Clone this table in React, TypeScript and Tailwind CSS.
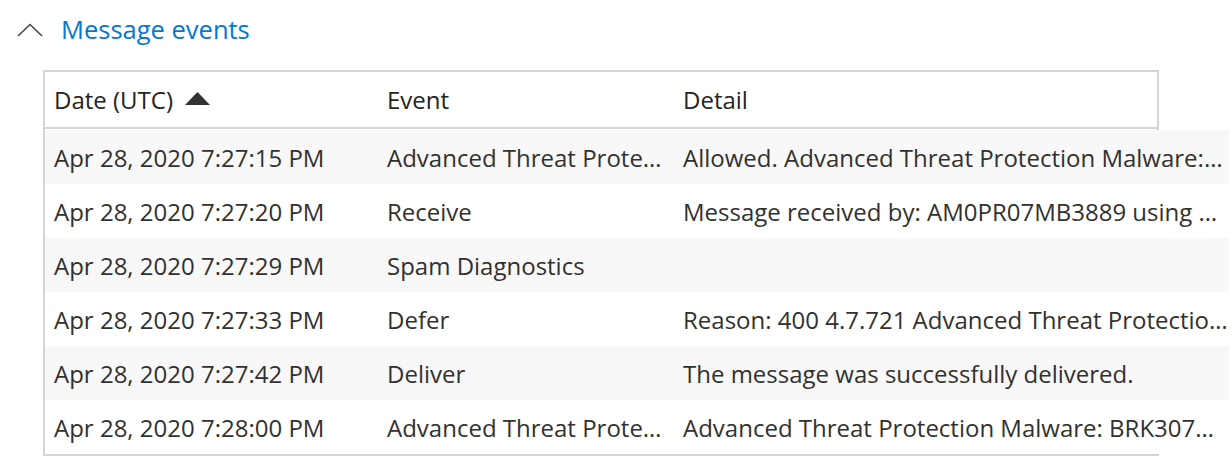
import React from "react";

const rows = [
  ["Apr 28, 2020 7:27:15 PM", "Advanced Threat Prote…", "Allowed. Advanced Threat Protection Malware:…"],
  ["Apr 28, 2020 7:27:20 PM", "Receive", "Message received by: AM0PR07MB3889 using …"],
  ["Apr 28, 2020 7:27:29 PM", "Spam Diagnostics", ""],
  ["Apr 28, 2020 7:27:33 PM", "Defer", "Reason: 400 4.7.721 Advanced Threat Protectio…"],
  ["Apr 28, 2020 7:27:42 PM", "Deliver", "The message was successfully delivered."],
  ["Apr 28, 2020 7:28:00 PM", "Advanced Threat Prote…", "Advanced Threat Protection Malware: BRK307…"],
];

export default function App() {
  return (
    <div
      className="w-[1232px] h-[470px] bg-white overflow-hidden text-[#323130]"
      style={{ fontFamily: '"Segoe UI", "Open Sans", "Noto Sans", sans-serif' }}
    >
      <div className="flex items-center h-[60px] pl-[17px]">
        <svg width="26" height="14" viewBox="0 0 26 14" className="mr-[18px]">
          <path d="M1 13 L13 1.5 L25 13" fill="none" stroke="#444" strokeWidth="1.6" />
        </svg>
        <span className="text-[25.5px] text-[#0078d4] leading-none">Message events</span>
      </div>
      <div className="ml-[43px] mt-[10px] w-[1116px] border-2 border-[#d4d4d4] overflow-visible">
        <div className="flex h-[57px] items-center pt-[1px] border-b-2 border-[#d4d4d4] text-[24px] text-[#252423]">
          <div className="w-[331px] pl-[9px] flex items-center">
            <span>Date (UTC)</span>
            <svg width="25" height="13" viewBox="0 0 25 13" className="ml-[12px] mb-[3px]">
              <path d="M12.5 0 L25 13 L0 13 Z" fill="#333" />
            </svg>
          </div>
          <div className="w-[296px] pl-[11px]">Event</div>
          <div className="pl-[11px]">Detail</div>
        </div>
        <div className="mt-[1px]">
          {rows.map((r, i) => (
            <div
              key={i}
              className={`flex h-[54px] items-center pt-[2px] w-[1184px] text-[24px] ${i % 2 === 0 ? "bg-[#f8f8f8]" : "bg-white"}`}
            >
              <div className="w-[331px] pl-[9px] whitespace-nowrap overflow-hidden">{r[0]}</div>
              <div className="w-[296px] pl-[11px] whitespace-nowrap overflow-hidden">{r[1]}</div>
              <div className="w-[557px] pl-[11px] whitespace-nowrap overflow-hidden">{r[2]}</div>
            </div>
          ))}
        </div>
      </div>
    </div>
  );
}
